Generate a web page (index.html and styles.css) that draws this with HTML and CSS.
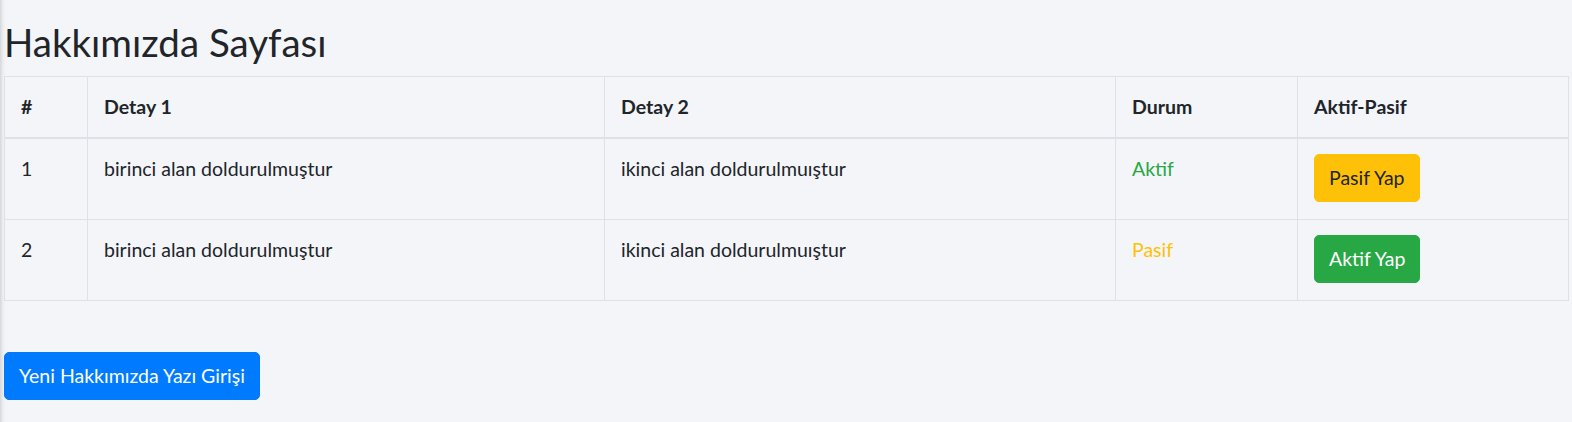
FILE: index.html
```html
<!DOCTYPE html>
<html lang="tr">
<head>
<meta charset="utf-8">
<title>Hakkımızda Sayfası</title>
<link rel="stylesheet" href="styles.css">
</head>
<body>
<div class="page">
  <h2 class="title">Hakkımızda Sayfası</h2>
  <table class="table">
    <colgroup>
      <col class="c-num">
      <col class="c-d1">
      <col class="c-d2">
      <col class="c-state">
      <col class="c-act">
    </colgroup>
    <thead>
      <tr>
        <th>#</th>
        <th>Detay 1</th>
        <th>Detay 2</th>
        <th>Durum</th>
        <th>Aktif-Pasif</th>
      </tr>
    </thead>
    <tbody>
      <tr>
        <td>1</td>
        <td>birinci alan doldurulmuştur</td>
        <td>ikinci alan doldurulmuıştur</td>
        <td class="text-success">Aktif</td>
        <td><a class="btn btn-warning">Pasif Yap</a></td>
      </tr>
      <tr>
        <td>2</td>
        <td>birinci alan doldurulmuştur</td>
        <td>ikinci alan doldurulmuıştur</td>
        <td class="text-warning">Pasif</td>
        <td><a class="btn btn-success">Aktif Yap</a></td>
      </tr>
    </tbody>
  </table>
  <div class="actions">
    <a class="btn btn-primary">Yeni Hakkımızda Yazı Girişi</a>
  </div>
</div>
</body>
</html>
```

FILE: styles.css
```css
html, body {
  margin: 0;
  padding: 0;
}
body {
  background: linear-gradient(to right, #d6d7db 0px, #eceef2 3px, #f4f5f9 6px) #f4f5f9;
  color: #212529;
  font-family: Lato, "Noto Sans", sans-serif;
  font-size: 19.5px;
  line-height: 30px;
  min-height: 422px;
}
.page {
  padding: 18px 4px 0 4px;
}
.title {
  margin: 0 0 10px 0;
  font-size: 38.5px;
  font-weight: 400;
  line-height: 48px;
}
.table {
  width: 1564px;
  table-layout: fixed;
  border-collapse: collapse;
  margin-bottom: 51px;
}
.c-num { width: 83px; }
.c-d1 { width: 517px; }
.c-d2 { width: 511px; }
.c-state { width: 182px; }
.c-act { width: 271px; }
.table th,
.table td {
  border: 1px solid #dee2e6;
  padding: 15px 16px;
  vertical-align: top;
  text-align: left;
}
.table th {
  font-weight: 700;
}
.table thead th {
  border-bottom: 2px solid #dee2e6;
}
.table tbody td {
  height: 50px;
}
.text-success { color: #28a745; }
.text-warning { color: #ffc107; }
.btn {
  display: inline-block;
  padding: 8px 14px;
  font-size: 19.5px;
  line-height: 30px;
  border: 1px solid transparent;
  border-radius: 5px;
  text-decoration: none;
  cursor: pointer;
}
.btn-warning {
  background: #ffc107;
  border-color: #ffc107;
  color: #212529;
}
.btn-success {
  background: #28a745;
  border-color: #28a745;
  color: #fff;
}
.btn-primary {
  background: #007bff;
  border-color: #007bff;
  color: #fff;
}
.actions {
  display: flex;
}
```
